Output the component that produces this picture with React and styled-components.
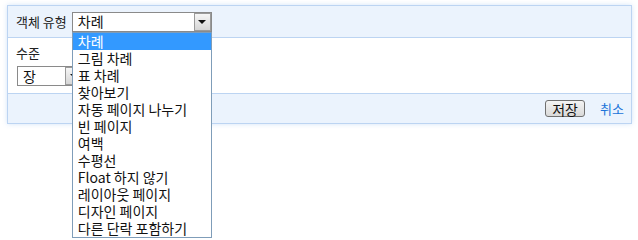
import styled, { createGlobalStyle } from "styled-components";

const items = [
  "차례",
  "그림 차례",
  "표 차례",
  "찾아보기",
  "자동 페이지 나누기",
  "빈 페이지",
  "여백",
  "수평선",
  "Float 하지 않기",
  "레이아웃 페이지",
  "디자인 페이지",
  "다른 단락 포함하기",
];

const GlobalStyle = createGlobalStyle`
  html, body {
    margin: 0;
    min-height: 240px;
    background: #ffffff;
    font-family: "Noto Sans CJK KR", "Noto Sans", sans-serif;
    font-size: 14px;
    color: #222;
  }
`;

const Page = styled.div`
  padding: 5px 0 0 7px;
  width: 625px;
  height: 235px;
`;

const Panel = styled.div`
  border: 1px solid #bcd4f2;
  box-shadow: 0 0 5px rgba(160, 195, 240, 0.45);
  position: relative;
`;

const Header = styled.div`
  display: flex;
  align-items: center;
  height: 31px;
  padding: 0 8px;
  background: #ebf3fd;
  border-bottom: 1px solid #bcd4f2;
  gap: 5px;
`;

const Label = styled.span`
  font-size: 13px;
  line-height: 17px;
  white-space: nowrap;
`;

const Body = styled.div`
  display: flex;
  flex-direction: column;
  align-items: flex-start;
  padding: 6px 8px 6px 8px;
  height: 43px;
  background: #fff;
  border-bottom: 1px solid #bcd4f2;
  gap: 5px;
`;

const SelectWrap = styled.div`
  position: relative;
`;

const Select = styled.div`
  display: flex;
  align-items: center;
  justify-content: space-between;
  box-sizing: border-box;
  width: ${(p) => p.$width}px;
  height: 20px;
  margin-left: ${(p) => p.$offset || 0}px;
  border: 1px solid #8a8a8a;
  background: #fff;
  padding-left: 5px;
  line-height: 17px;
  color: #111;
`;

const ArrowBtn = styled.div`
  box-sizing: border-box;
  width: 17px;
  height: 18px;
  border: 1px solid #9a9a9a;
  background: linear-gradient(#f6f6f6, #d6d6d6);
  display: flex;
  align-items: center;
  justify-content: center;

  &::after {
    content: "";
    border-left: 4px solid transparent;
    border-right: 4px solid transparent;
    border-top: 4px solid #111;
  }
`;

const List = styled.ul`
  position: absolute;
  left: 0;
  top: 20px;
  width: 140px;
  box-sizing: border-box;
  margin: 0;
  padding: 0;
  list-style: none;
  background: #fff;
  border: 1px solid #7f9db9;
  z-index: 10;
`;

const Option = styled.li`
  height: 17px;
  line-height: 17px;
  padding-left: 5px;
  white-space: nowrap;
  color: ${(p) => (p.$active ? "#fff" : "#111")};
  background: ${(p) => (p.$active ? "#3399ff" : "transparent")};
`;

const Footer = styled.div`
  display: flex;
  align-items: center;
  justify-content: flex-end;
  height: 29px;
  padding-right: 7px;
  background: #ebf3fd;
  gap: 15px;
`;

const SaveButton = styled.button`
  box-sizing: border-box;
  width: 40px;
  height: 17px;
  padding: 0;
  border: 1px solid #707070;
  border-radius: 3px;
  background: linear-gradient(#f4f4f4, #d9d9d9);
  font-family: inherit;
  font-size: 14px;
  line-height: 14px;
  color: #111;
`;

const CancelLink = styled.a`
  color: #1a73d9;
  text-decoration: none;
  font-size: 13px;
  line-height: 17px;
`;

export default function App() {
  return (
    <>
      <GlobalStyle />
      <Page>
        <Panel>
          <Header>
            <Label>객체 유형</Label>
            <SelectWrap>
              <Select $width={140}>
                <span>차례</span>
                <ArrowBtn />
              </Select>
              <List>
                {items.map((item, i) => (
                  <Option key={item} $active={i === 0}>
                    {item}
                  </Option>
                ))}
              </List>
            </SelectWrap>
          </Header>
          <Body>
            <Label>수준</Label>
            <Select $width={66} $offset={1}>
              <span>장</span>
              <ArrowBtn />
            </Select>
          </Body>
          <Footer>
            <SaveButton>저장</SaveButton>
            <CancelLink href="#">취소</CancelLink>
          </Footer>
        </Panel>
      </Page>
    </>
  );
}
